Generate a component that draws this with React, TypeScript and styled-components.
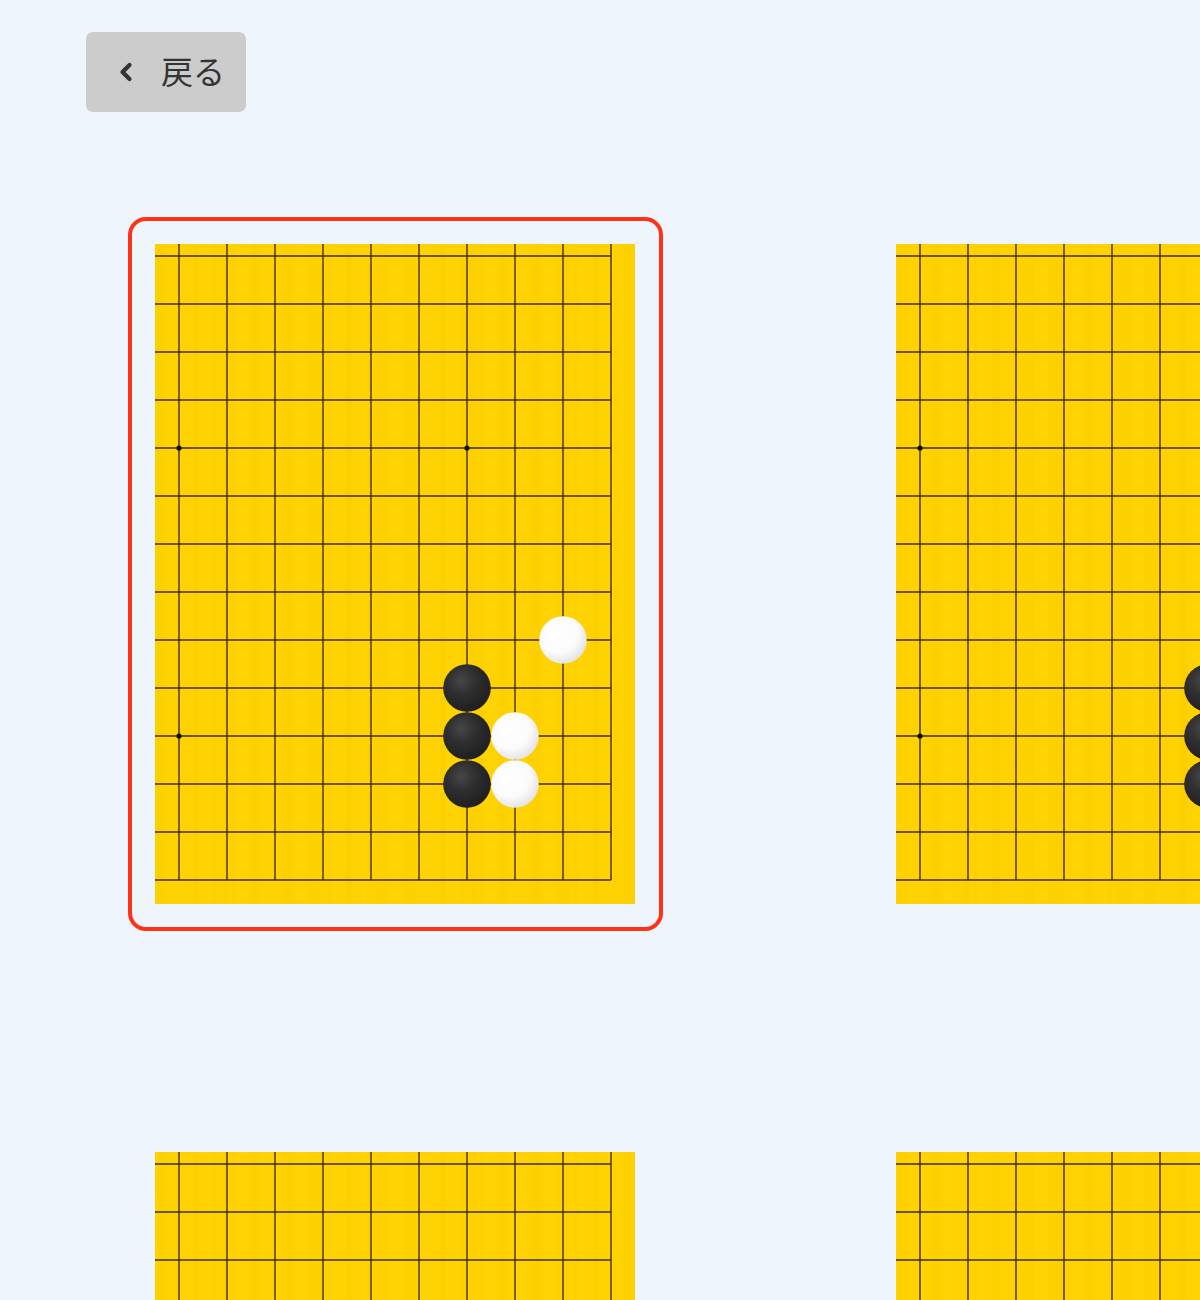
import { useId } from "react";
import styled, { createGlobalStyle } from "styled-components";
import { ChevronLeft } from "lucide-react";

// board window: columns 10-19, rows 6-19 of a 19x19 goban
const CELL = 48;
const COLS = 10;
const ROWS = 14;
const PAD_X = 24;
const PAD_Y = 12;
const BOARD_W = 480;
const BOARD_H = 660;

type Stone = { c: number; r: number; color: "b" | "w" };

type Problem = { id: number; stones: Stone[] };

const STARS = [
  { c: 0, r: 4 },
  { c: 6, r: 4 },
  { c: 0, r: 10 },
  { c: 6, r: 10 },
];

const problems: Problem[] = [
  {
    id: 1,
    stones: [
      { c: 8, r: 8, color: "w" },
      { c: 6, r: 9, color: "b" },
      { c: 6, r: 10, color: "b" },
      { c: 7, r: 10, color: "w" },
      { c: 6, r: 11, color: "b" },
      { c: 7, r: 11, color: "w" },
    ],
  },
  {
    id: 2,
    stones: [
      { c: 6, r: 9, color: "b" },
      { c: 6, r: 10, color: "b" },
      { c: 6, r: 11, color: "b" },
      { c: 7, r: 9, color: "w" },
      { c: 7, r: 11, color: "w" },
      { c: 8, r: 10, color: "w" },
    ],
  },
  {
    id: 3,
    stones: [
      { c: 7, r: 10, color: "b" },
      { c: 8, r: 11, color: "w" },
    ],
  },
  {
    id: 4,
    stones: [
      { c: 6, r: 11, color: "b" },
      { c: 7, r: 12, color: "w" },
    ],
  },
];

const GlobalStyle = createGlobalStyle`
  html, body {
    margin: 0;
    overflow: hidden;
    background: #eef5fc;
    font-family: "Noto Sans CJK JP", "Noto Sans", sans-serif;
  }
`;

const Page = styled.main`
  padding: 32px 0 0 86px;
`;

const BackButton = styled.button`
  display: flex;
  align-items: center;
  gap: 21px;
  width: 160px;
  height: 80px;
  padding: 0 0 5px 26px;
  border: none;
  border-radius: 7px;
  background: #cccccc;
  color: #333333;
  font-family: inherit;
  font-size: 32px;
  line-height: 1;
  cursor: pointer;

  svg {
    flex-shrink: 0;
    margin-top: 4px;
  }
`;

const ProblemGrid = styled.div`
  display: grid;
  grid-template-columns: repeat(2, 535px);
  column-gap: 206px;
  row-gap: 194px;
  margin: 105px 0 0 42px;
`;

const Card = styled.div<{ $selected?: boolean }>`
  padding: 23px;
  border: 4px solid ${(p) => (p.$selected ? "#ff3218" : "transparent")};
  border-radius: 18px;
  cursor: pointer;
`;

const Wood = styled.div`
  width: ${BOARD_W}px;
  height: ${BOARD_H}px;
  background-color: #ffd200;
  background-image:
    repeating-linear-gradient(
      90deg,
      rgba(255, 255, 255, 0) 0px,
      rgba(240, 190, 0, 0.1) 9px,
      rgba(255, 255, 255, 0) 14px,
      rgba(255, 225, 60, 0.08) 23px,
      rgba(255, 255, 255, 0) 31px
    ),
    repeating-linear-gradient(
      90deg,
      rgba(230, 180, 0, 0) 0px,
      rgba(230, 180, 0, 0.06) 4px,
      rgba(230, 180, 0, 0) 7px,
      rgba(230, 180, 0, 0) 19px
    );

  svg {
    display: block;
  }
`;

const px = (c: number) => PAD_X + c * CELL;
const py = (r: number) => PAD_Y + r * CELL;

const Board = ({ stones }: { stones: Stone[] }) => {
  const uid = useId().replace(/:/g, "");
  const lastX = px(COLS - 1);
  const lastY = py(ROWS - 1);

  return (
    <Wood>
      <svg width={BOARD_W} height={BOARD_H} viewBox={`0 0 ${BOARD_W} ${BOARD_H}`}>
        <defs>
          <radialGradient id={`black-${uid}`} cx="38%" cy="34%" r="70%">
            <stop offset="0%" stopColor="#474747" />
            <stop offset="45%" stopColor="#2e2e2e" />
            <stop offset="100%" stopColor="#1e1e1e" />
          </radialGradient>
          <radialGradient id={`white-${uid}`} cx="40%" cy="36%" r="70%">
            <stop offset="0%" stopColor="#ffffff" />
            <stop offset="60%" stopColor="#fbfbfb" />
            <stop offset="100%" stopColor="#dedede" />
          </radialGradient>
        </defs>

        <g stroke="#3f2e00" strokeWidth={1.4}>
          {Array.from({ length: COLS }, (_, c) => (
            <line key={`v${c}`} x1={px(c)} y1={0} x2={px(c)} y2={lastY} />
          ))}
          {Array.from({ length: ROWS }, (_, r) => (
            <line key={`h${r}`} x1={0} y1={py(r)} x2={lastX} y2={py(r)} />
          ))}
        </g>

        {STARS.map((s) => (
          <circle key={`s${s.c}-${s.r}`} cx={px(s.c)} cy={py(s.r)} r={2.6} fill="#111" />
        ))}

        {stones.map((s) => (
          <circle
            key={`${s.c}-${s.r}`}
            cx={px(s.c)}
            cy={py(s.r)}
            r={23.8}
            fill={`url(#${s.color === "b" ? "black" : "white"}-${uid})`}
          />
        ))}
      </svg>
    </Wood>
  );
};

export default function App() {
  return (
    <>
      <GlobalStyle />
      <Page>
        <BackButton type="button">
          <ChevronLeft size={28} strokeWidth={3.6} />
          <span>戻る</span>
        </BackButton>

        <ProblemGrid>
          {problems.map((p, i) => (
            <Card key={p.id} $selected={i === 0}>
              <Board stones={p.stones} />
            </Card>
          ))}
        </ProblemGrid>
      </Page>
    </>
  );
}
